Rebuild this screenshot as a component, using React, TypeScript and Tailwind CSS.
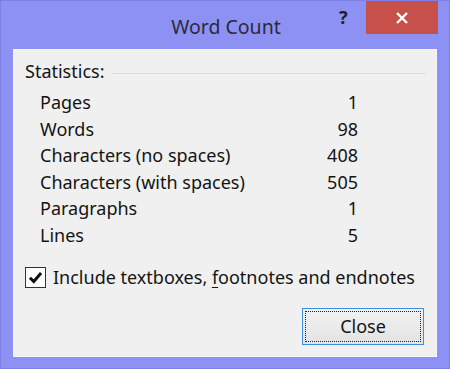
const STATS: [string, string][] = [
  ['Pages', '1'],
  ['Words', '98'],
  ['Characters (no spaces)', '408'],
  ['Characters (with spaces)', '505'],
  ['Paragraphs', '1'],
  ['Lines', '5'],
];

function CheckMark() {
  return (
    <svg width="15" height="15" viewBox="0 0 14 14">
      <path d="M1.8 7.2 L5.4 10.8 L12.2 2.8" fill="none" stroke="#111" strokeWidth="2.8" />
    </svg>
  );
}

export default function App() {
  return (
    <div
      className="w-[450px] h-[369px] bg-[#8e91f4] border border-[#7c80e4] flex flex-col overflow-hidden text-[#141414]"
      style={{ fontFamily: '"Noto Sans", "Open Sans", sans-serif' }}
    >
      {/* Title bar */}
      <div className="h-[48px] relative flex items-start justify-center">
        <div className="mt-[11px] ml-[2px] text-[19.5px] text-[#2a2a38]">Word Count</div>
        <div className="absolute left-[338px] top-[3px] text-[18px] font-bold text-[#1f1f2a]">?</div>
        <div className="absolute left-[365px] top-0 w-[72px] h-[33px] bg-[#c8504b] flex items-center justify-center">
          <svg width="14" height="14" viewBox="0 0 14 14">
            <path d="M2 2 L12 12 M12 2 L2 12" stroke="#fff" strokeWidth="2.4" />
          </svg>
        </div>
      </div>

      {/* Panel */}
      <div className="mx-[12px] h-[308px] bg-[#f0f0f0] border border-[#f6f6fb] flex flex-col">
        <div className="mt-[8px] ml-[11px] mr-[10px] flex items-center gap-[7px] text-[18px]">
          <span>Statistics:</span>
          <div className="flex-1 h-px bg-[#dcdcdc] mt-[3px]" />
        </div>

        <div className="mt-[4px] ml-[26px] w-[318px] flex flex-col text-[18px] leading-[26.5px]">
          {STATS.map(([label, value]) => (
            <div key={label} className="flex justify-between">
              <span>{label}</span>
              <span>{value}</span>
            </div>
          ))}
        </div>

        <div className="mt-[16px] ml-[11px] flex items-center gap-[7px] text-[18px]">
          <div className="w-[21px] h-[21px] border border-[#333] bg-white flex items-center justify-center">
            <CheckMark />
          </div>
          <span>
            Include textboxes, <span className="underline underline-offset-3">f</span>ootnotes and endnotes
          </span>
        </div>

        <div className="mt-[17px] mr-[12px] flex justify-end">
          <div className="w-[122px] h-[37px] border border-[#3c8fe0] bg-gradient-to-b from-[#f2f2f2] to-[#e3e3e3] p-[2px]">
            <div className="w-full h-full border border-dotted border-[#222] flex items-center justify-center text-[18px]">
              Close
            </div>
          </div>
        </div>
      </div>
    </div>
  );
}
